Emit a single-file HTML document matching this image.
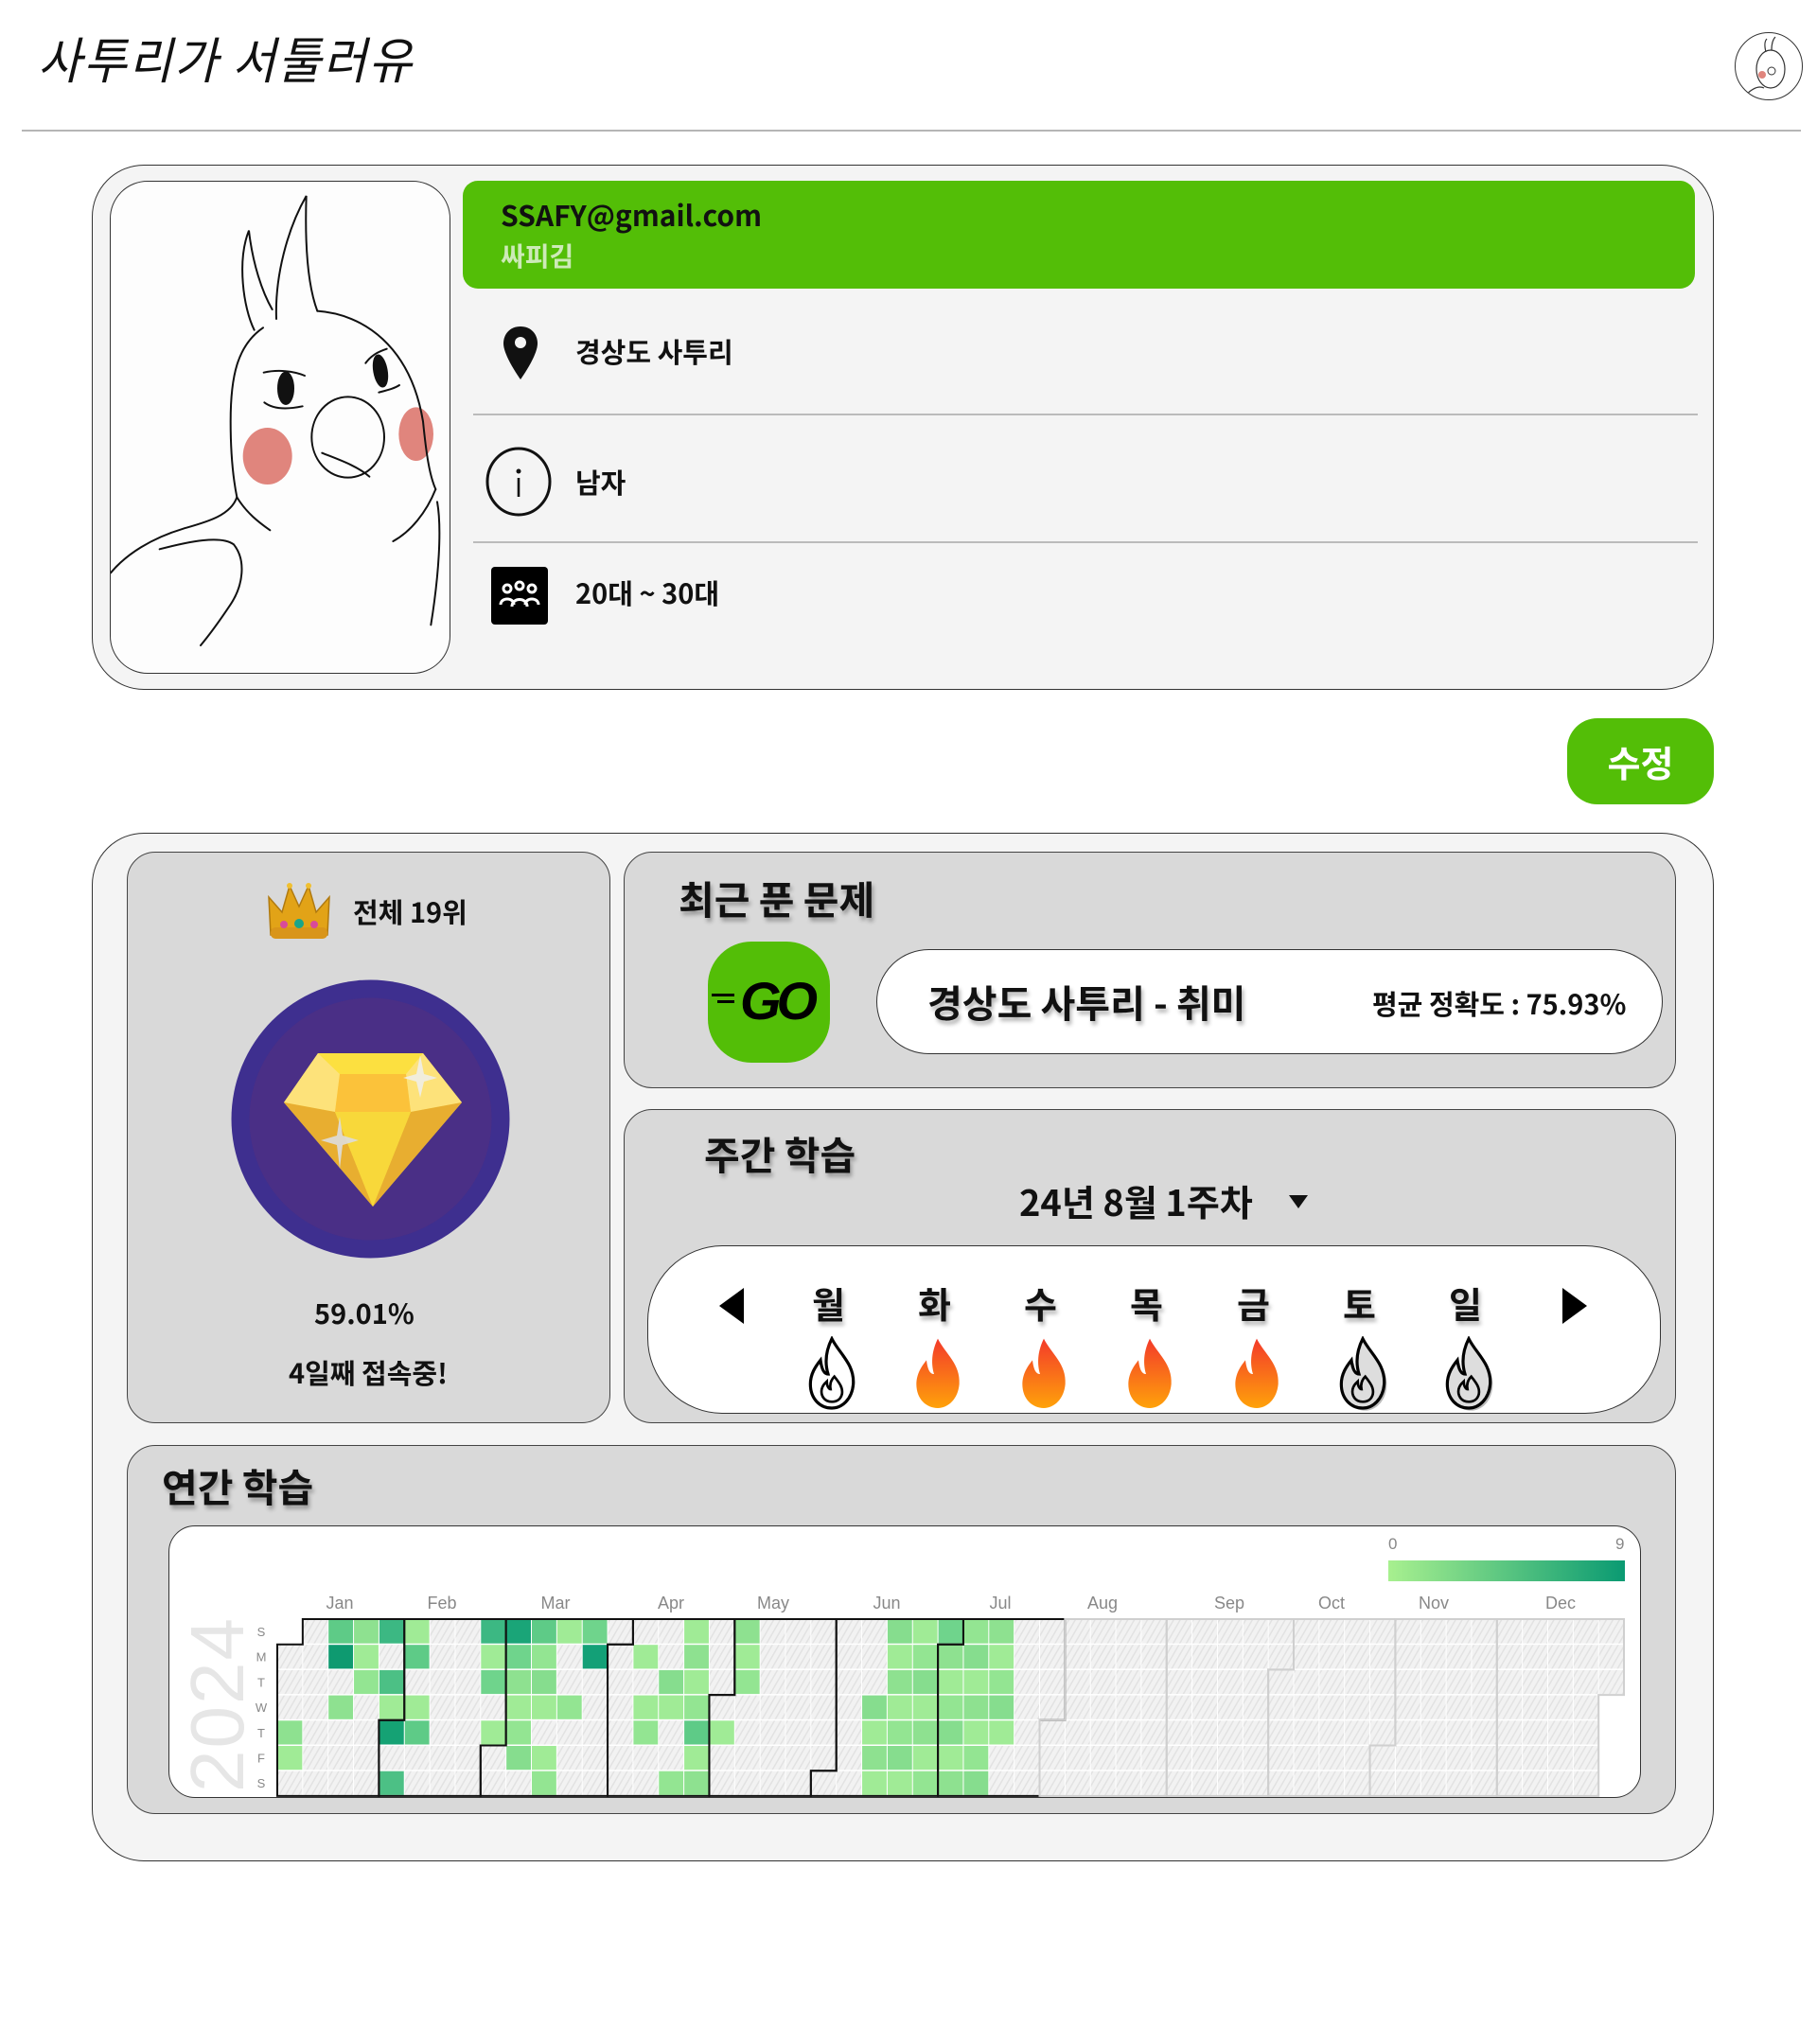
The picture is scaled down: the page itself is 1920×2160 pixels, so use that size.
<!DOCTYPE html>
<html><head><meta charset="utf-8">
<style>
*{box-sizing:border-box;margin:0;padding:0}
body{width:1920px;height:2160px;background:#fff;font-family:"Liberation Sans","Noto Sans CJK KR",sans-serif;position:relative;overflow:hidden;color:#111}
.abs{position:absolute}
.t{font-family:"Noto Sans CJK KR","Liberation Sans",sans-serif;font-weight:700;white-space:nowrap;line-height:1}
.card{position:absolute;background:#f4f4f4;border:1.5px solid #333;border-radius:55px}
.panel{position:absolute;background:#d9d9d9;border:1.5px solid #444;border-radius:30px}
.sh{text-shadow:2px 4px 4px rgba(0,0,0,.3)}
</style></head><body>

<div class="abs t" style="left:40px;top:36px;font-size:50px;font-weight:400;font-style:italic;letter-spacing:2px;transform:scaleY(1.05)">사투리가 서툴러유</div>
<div class="abs" style="left:1833px;top:34px;width:72px;height:72px;border-radius:50%;border:1.5px solid #333;background:#fff;overflow:hidden">
<svg width="72" height="72" viewBox="0 0 72 72"><path d="M32 20 C30 12 31 8 33 6 M38 18 C38 10 40 6 42 4" stroke="#333" fill="none" stroke-width="1.2"/><ellipse cx="37" cy="38" rx="15" ry="20" fill="none" stroke="#333" stroke-width="1.2"/><circle cx="28" cy="44" r="4" fill="#e0857d"/><circle cx="38" cy="40" r="4" fill="none" stroke="#333"/><path d="M10 66 C20 56 26 56 30 58" stroke="#333" fill="none" stroke-width="1.2"/></svg></div>
<div class="abs" style="left:23px;top:137px;width:1880px;height:2px;background:#b5b5b5"></div>

<div class="card" style="left:97px;top:174px;width:1714px;height:555px"></div>
<div class="abs" style="left:116px;top:191px;width:360px;height:521px;border:1.5px solid #333;border-radius:40px;background:#fdfdfd;overflow:hidden">
<svg width="360" height="520" viewBox="0 0 1080 1560" fill="none" stroke="#111" stroke-width="6" stroke-linecap="round">
<ellipse cx="497" cy="870" rx="78" ry="90" fill="#e0857d" stroke="none"/>
<ellipse cx="968" cy="800" rx="55" ry="85" fill="#e0857d" stroke="none"/>
<path d="M455 470 C420 400 400 250 438 155 C450 260 480 350 512 405"/>
<path d="M525 435 C520 300 560 150 620 45 C615 200 625 330 655 410"/>
<path d="M655 410 C800 420 950 520 990 760 C1000 860 1010 930 1030 975"/>
<path d="M483 463 C400 520 380 620 380 760 C380 880 390 950 400 1000 C430 1050 470 1080 505 1105"/>
<path d="M400 1000 C380 1060 300 1080 230 1100 C130 1130 50 1180 0 1240"/>
<path d="M155 1165 C250 1140 350 1120 390 1150 C430 1200 420 1280 380 1340 C340 1400 310 1440 285 1470"/>
<path d="M1030 975 C1000 1050 950 1110 895 1140"/>
<path d="M1035 1015 C1050 1100 1040 1250 1015 1405"/>
<ellipse cx="752" cy="810" rx="115" ry="128"/>
<path d="M670 860 C720 880 780 900 820 935"/>
<path d="M485 605 C530 595 580 600 615 615"/><path d="M487 700 C520 725 570 720 608 712"/>
<ellipse cx="555" cy="655" rx="24" ry="50" fill="#111"/>
<path d="M808 575 C830 545 860 535 875 530"/><path d="M850 668 C880 660 900 655 915 645"/>
<ellipse cx="855" cy="600" rx="20" ry="50" fill="#111" transform="rotate(-10 855 600)"/>
</svg></div>

<div class="abs" style="left:489px;top:191px;width:1302px;height:114px;background:#53be07;border-radius:16px"></div>
<div class="abs t" style="left:529px;top:211px;font-size:30px;font-weight:700;color:#111">SSAFY@gmail.com</div>
<div class="abs t" style="left:529px;top:256px;font-size:28px;font-weight:600;color:#cdeab8">싸피김</div>

<svg class="abs" style="left:529px;top:343px" width="42" height="60" viewBox="0 0 42 60"><path d="M21 2 C10 2 3 10 3 20 C3 33 21 58 21 58 C21 58 39 33 39 20 C39 10 32 2 21 2 Z" fill="#111"/><circle cx="21" cy="19" r="6" fill="#f4f4f4"/></svg>
<div class="abs t" style="left:608px;top:357px;font-size:29px;font-weight:600">경상도 사투리</div>
<div class="abs" style="left:500px;top:437px;width:1294px;height:2px;background:#bbb"></div>
<svg class="abs" style="left:512px;top:471px" width="72" height="76" viewBox="0 0 72 76"><ellipse cx="36" cy="38" rx="33" ry="35" fill="none" stroke="#111" stroke-width="3"/><circle cx="36" cy="27" r="2.5" fill="#111"/><rect x="34.7" y="34" width="2.6" height="20" fill="#111"/></svg>
<div class="abs t" style="left:608px;top:495px;font-size:29px;font-weight:600">남자</div>
<div class="abs" style="left:500px;top:572px;width:1294px;height:2px;background:#bbb"></div>
<div class="abs" style="left:519px;top:599px;width:60px;height:61px;background:#000;border-radius:4px">
<svg width="60" height="61" viewBox="0 0 60 61" fill="none" stroke="#fff" stroke-width="3"><circle cx="17" cy="23" r="4"/><circle cx="30" cy="20" r="4"/><circle cx="43" cy="23" r="4"/><path d="M10 40 C10 32 24 32 24 40"/><path d="M22 42 C22 32 38 32 38 42"/><path d="M36 40 C36 32 50 32 50 40"/></svg></div>
<div class="abs t" style="left:608px;top:612px;font-size:29px;font-weight:700">20대 ~ 30대</div>

<div class="abs t" style="left:1656px;top:759px;width:155px;height:91px;background:#53be07;border-radius:32px;color:#fff;font-size:38px;display:flex;align-items:center;justify-content:center">수정</div>

<div class="card" style="left:97px;top:880px;width:1714px;height:1087px"></div>

<div class="panel" style="left:134px;top:900px;width:511px;height:604px"></div>
<svg class="abs" style="left:280px;top:930px" width="72" height="66" viewBox="0 0 72 66"><path d="M6 58 L4 18 L18 34 L26 6 L36 28 L46 6 L54 34 L68 18 L66 58 Z" fill="#e2a317" stroke="#b07a10" stroke-width="1.5"/><rect x="6" y="50" width="60" height="12" rx="5" fill="#d9951a"/><circle cx="36" cy="46" r="5" fill="#1aa58a"/><circle cx="20" cy="47" r="4" fill="#d94a9a"/><circle cx="52" cy="47" r="4" fill="#d94a9a"/><circle cx="26" cy="6" r="3" fill="#f0c030"/><circle cx="46" cy="6" r="3" fill="#f0c030"/></svg>
<div class="abs t" style="left:373px;top:949px;font-size:29px;font-weight:700">전체 19위</div>
<svg class="abs" style="left:244px;top:1035px" width="295" height="295" viewBox="0 0 295 295"><circle cx="147.5" cy="147.5" r="147" fill="#3e2f8f"/><circle cx="147.5" cy="147.5" r="128" fill="#4a2f86"/>
<path d="M56 130 L92 78 L203 78 L244 130 L150 240 Z" fill="#fbe24a"/>
<path d="M56 130 L92 78 L115 100 L110 140 Z" fill="#fde27a"/>
<path d="M244 130 L203 78 L185 100 L190 140 Z" fill="#fde27a"/>
<path d="M115 100 L185 100 L190 140 L110 140 Z" fill="#fbc23a"/>
<path d="M56 130 L110 140 L150 240 Z" fill="#e8ae30"/>
<path d="M244 130 L190 140 L150 240 Z" fill="#e8ae30"/>
<path d="M110 140 L190 140 L150 240 Z" fill="#f8d83a"/>
<path d="M92 78 L203 78 L185 100 L115 100 Z" fill="#fce040"/>
<path d="M200 80 L204 100 L218 104 L204 108 L200 125 L196 108 L182 104 L196 100 Z" fill="#eee" opacity=".85"/>
<path d="M115 145 L118 165 L135 170 L118 175 L115 200 L112 175 L95 170 L112 165 Z" fill="#ddd" opacity=".9"/></svg>
<div class="abs t" style="left:332px;top:1373px;font-size:29px;font-weight:700">59.01%</div>
<div class="abs t" style="left:305px;top:1436px;font-size:29px;font-weight:700">4일째 접속중!</div>

<div class="panel" style="left:659px;top:900px;width:1112px;height:250px"></div>
<div class="abs t sh" style="left:717px;top:928px;font-size:41px">최근 푼 문제</div>
<div class="abs" style="left:748px;top:995px;width:129px;height:128px;background:#53be07;border-radius:46px"></div>
<div class="abs t" style="left:782px;top:1030px;font-size:56px;font-style:italic;font-family:'Liberation Sans',sans-serif;font-weight:700;letter-spacing:-5px;color:#000">GO</div>
<div class="abs" style="left:752px;top:1050px;width:24px;height:3px;background:#000"></div>
<div class="abs" style="left:758px;top:1057px;width:18px;height:3px;background:#000"></div>
<div class="abs" style="left:926px;top:1003px;width:831px;height:111px;background:#fff;border:1.5px solid #333;border-radius:56px"></div>
<div class="abs t sh" style="left:980px;top:1038px;font-size:40px">경상도 사투리 - 취미</div>
<div class="abs t" style="left:1450px;top:1046px;font-size:29px;font-weight:700">평균 정확도 : 75.93%</div>

<div class="panel" style="left:659px;top:1172px;width:1112px;height:332px"></div>
<div class="abs t sh" style="left:744px;top:1198px;font-size:41px">주간 학습</div>
<div class="abs t" style="left:1077px;top:1250px;font-size:38px;font-weight:700">24년 8월 1주차</div>
<div class="abs" style="left:1362px;top:1263px;width:0;height:0;border-left:10px solid transparent;border-right:10px solid transparent;border-top:14px solid #111"></div>
<div class="abs" style="left:684px;top:1316px;width:1071px;height:178px;background:#fff;border:1.5px solid #333;border-radius:80px"></div>
<div class="abs" style="left:760px;top:1361px;width:0;height:0;border-top:19px solid transparent;border-bottom:19px solid transparent;border-right:26px solid #000"></div>
<div class="abs" style="left:1651px;top:1361px;width:0;height:0;border-top:19px solid transparent;border-bottom:19px solid transparent;border-left:26px solid #000"></div>
<div id="days"></div>

<div class="panel" style="left:134px;top:1527px;width:1637px;height:390px"></div>
<div class="abs t sh" style="left:171px;top:1549px;font-size:41px">연간 학습</div>
<div class="abs" style="left:178px;top:1612px;width:1556px;height:288px;background:#fff;border:1.5px solid #333;border-radius:28px"></div>
<div class="abs t" style="left:1467px;top:1623px;font-size:17px;font-weight:400;color:#888;font-family:'Liberation Sans',sans-serif">0</div>
<div class="abs t" style="left:1707px;top:1623px;font-size:17px;font-weight:400;color:#888;font-family:'Liberation Sans',sans-serif">9</div>
<div class="abs" style="left:1467px;top:1649px;width:250px;height:22px;background:linear-gradient(90deg,#a8f08f,#0a9a72)"></div>
<div class="abs" style="left:190px;top:1714px;width:80px;height:180px;overflow:visible">
<div class="t" style="position:absolute;left:0;top:180px;transform-origin:0 0;transform:rotate(-90deg);font-size:80px;font-weight:300;color:#e6e6e6;font-family:'Liberation Sans',sans-serif;letter-spacing:2px">2024</div></div>
<svg id="hm" class="abs" style="left:260px;top:1680px" width="1470" height="225"></svg>

<script>
(function(){
var d=['월','화','수','목','금','토','일'],xs=[878,990,1102,1214,1327,1439,1551],h='';
var flame='M20 2 C26 14 38 22 37 38 C36 50 28 57 20 57 C11 57 3 50 3 38 C3 30 7 24 11 19 C12 27 14 30 17 30 C14 20 16 10 20 2 Z';
var inner='M20 52 C14 52 11 47 12 42 C13 38 15 37 16 36 C16 40 18 42 19 42 C18 37 20 34 22 32 C26 37 29 41 28 46 C27 50 24 52 20 52 Z';
for(var i=0;i<7;i++){
 h+='<div class="abs t sh" style="left:'+(xs[i]-20)+'px;top:1358px;font-size:38px">'+d[i]+'</div>';
 var s='<svg class="abs" style="left:'+(xs[i]-31)+'px;top:1412px" width="64" height="80" viewBox="0 0 40 60">';
 if(i==0) s+='<path d="'+flame+'" fill="#fff" stroke="#000" stroke-width="2.4"/><path d="'+inner+'" fill="none" stroke="#000" stroke-width="2"/>';
 else if(i>=5) s+='<path d="'+flame+'" transform="translate(2,2)" fill="#bbb"/><path d="'+flame+'" fill="#ddd" stroke="#000" stroke-width="2.4"/><path d="'+inner+'" fill="none" stroke="#000" stroke-width="2"/>';
 else s+='<defs><linearGradient id="g'+i+'" x1="0" y1="0" x2="0" y2="1"><stop offset="0" stop-color="#f33a2a"/><stop offset="1" stop-color="#ffa20a"/></linearGradient></defs><path d="'+flame+'" fill="url(#g'+i+')"/>';
 h+=s+'</svg>';
}
document.getElementById('days').outerHTML=h;
var ox=33,oy=31,cw=26.85,ch=26.7,svg='';
svg+='<defs><pattern id="hp" width="6" height="6" patternUnits="userSpaceOnUse" patternTransform="rotate(30)"><rect width="6" height="6" fill="#f2f2f2"/><rect width="1.5" height="6" fill="#e2e2e2"/></pattern></defs>';
var rows={0:[2,3,4,5,8,9,10,11,12,16,18,24,25,26,27,28],1:[2,3,5,8,9,10,12,14,16,18,24,25,26,27,28],2:[3,4,8,9,10,15,16,18,24,25,26,27,28],3:[2,4,5,9,10,11,14,15,16,23,24,25,26,27,28],4:[0,4,5,8,9,14,16,17,23,24,25,26,27,28],5:[0,9,10,16,23,24,25,26,27],6:[4,10,15,16,23,24,25,26,27]};
var dark={'1,2':'#0e9a70','1,12':'#13a077','4,4':'#15a274','0,9':'#1aa578','0,8':'#3cb883','0,4':'#3cb883','2,4':'#4cc085','6,4':'#4cc085','4,16':'#5ecb87','0,26':'#6fd48c','4,5':'#5ecb87','0,2':'#5ecb87','1,5':'#5ecb87','2,8':'#6fd48c','1,9':'#6fd48c','0,10':'#5ecb87','0,12':'#6fd48c'};
var pal=['#a0eb96','#93e592','#86dd8e','#a0eb96','#8ee190'];
var start=new Date(2024,0,1);
for(var t=0;t<366;t++){var dt=new Date(2024,0,1+t);var dow=dt.getDay();var col=Math.floor((t+1)/7);
 var x=ox+col*cw,y=oy+dow*ch,key=dow+','+col,fill='url(#hp)';
 if(rows[dow].indexOf(col)>=0) fill=dark[key]||pal[(col*3+dow)%5];
 svg+='<rect x="'+(x+0.5)+'" y="'+(y+0.5)+'" width="'+(cw-1)+'" height="'+(ch-1.5)+'" fill="'+fill+'"/>';}
var wk=function(t){return Math.floor((t+1)/7)};
var mn=['Jan','Feb','Mar','Apr','May','Jun','Jul','Aug','Sep','Oct','Nov','Dec'];
var lx=[359,467,587,709,817,937,1057,1165,1299,1407,1515,1649];
for(var m=0;m<12;m++){
 var t0=Math.round((new Date(2024,m,1)-start)/864e5),t1=Math.round((new Date(2024,m+1,0)-start)/864e5);
 var d0=new Date(2024,m,1).getDay(),d1=new Date(2024,m+1,0).getDay(),w0=wk(t0),w1=wk(t1);
 var p='M'+(ox+(w0+1)*cw)+','+(oy+d0*ch)+'H'+(ox+w0*cw)+'V'+(oy+7*ch)+'H'+(ox+w1*cw)+'V'+(oy+(d1+1)*ch)+'H'+(ox+(w1+1)*cw)+'V'+oy+'H'+(ox+(w0+1)*cw)+'Z';
 svg+='<path d="'+p+'" fill="none" stroke="'+(m<7?'#111':'#cfcfcf')+'" stroke-width="2"/>';
 svg+='<text x="'+(lx[m]-260)+'" y="20" font-size="18" fill="#888" text-anchor="middle" font-family="Liberation Sans,sans-serif">'+mn[m]+'</text>';
}
var dl=['S','M','T','W','T','F','S'];
for(var r=0;r<7;r++) svg+='<text x="16" y="'+(oy+r*ch+18)+'" font-size="13" fill="#888" text-anchor="middle" font-family="Liberation Sans,sans-serif">'+dl[r]+'</text>';
document.getElementById('hm').innerHTML=svg;
})();
</script>
</body></html>
